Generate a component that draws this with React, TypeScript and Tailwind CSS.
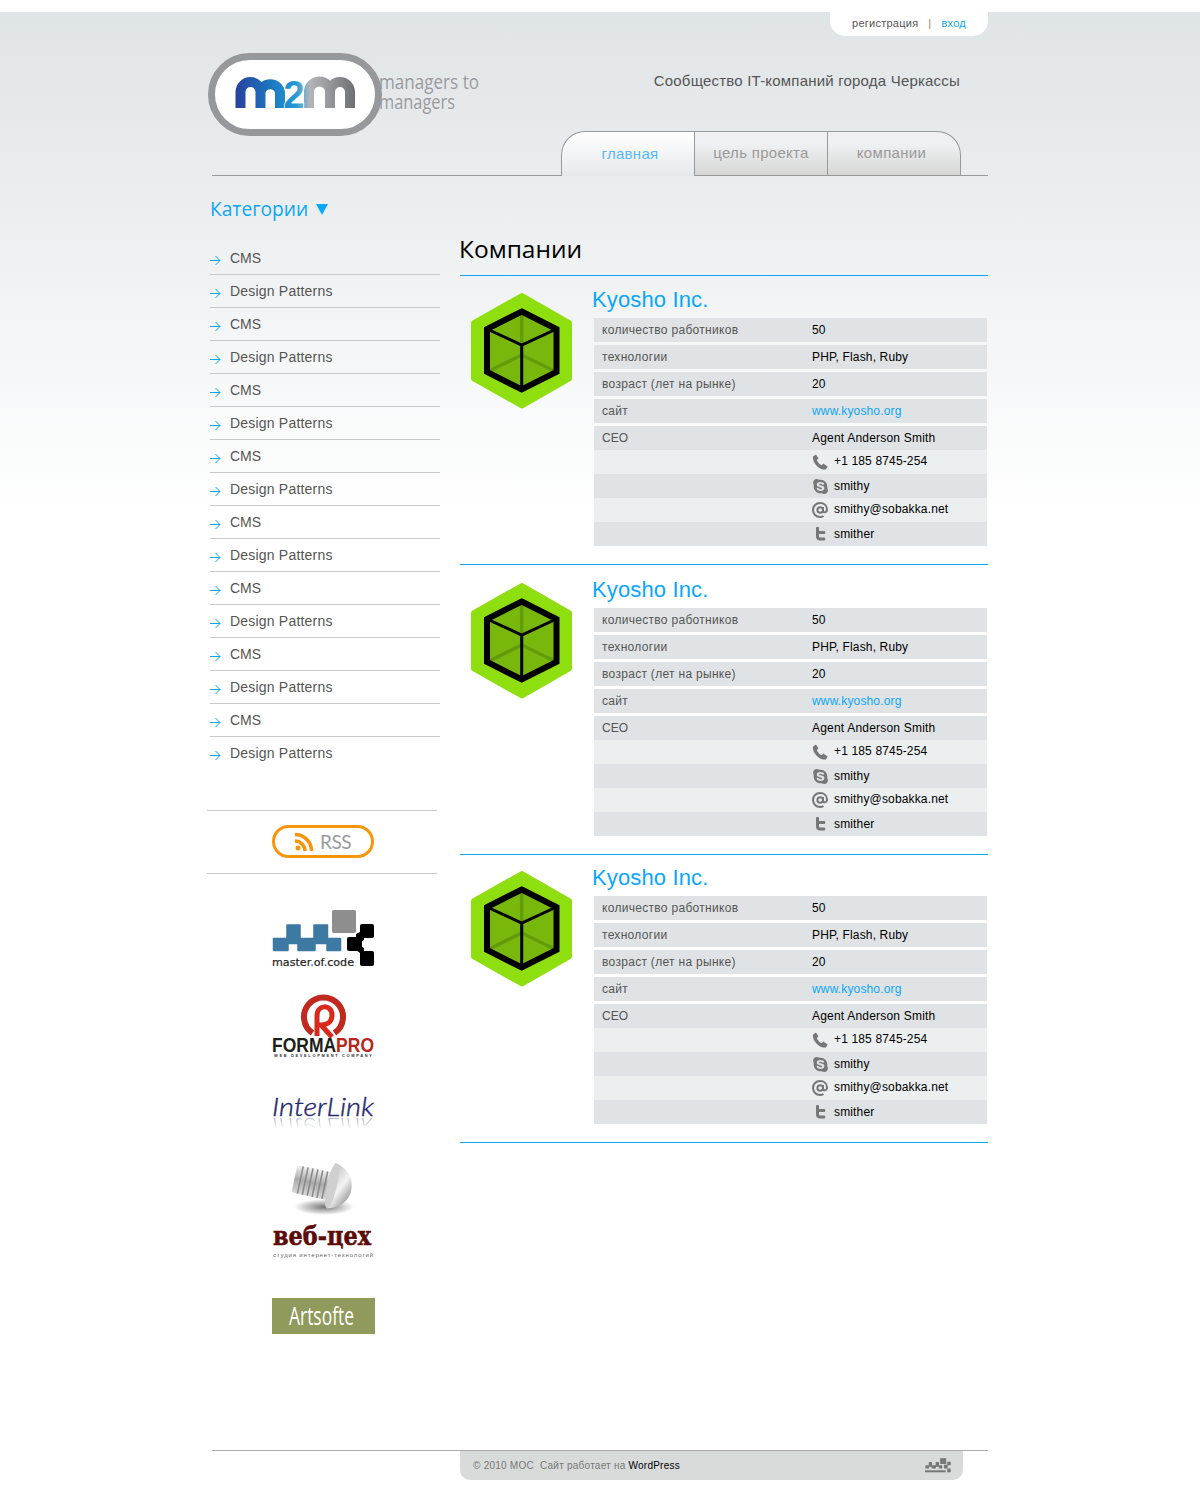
import { FaSkype } from "react-icons/fa";

const categories = Array.from({ length: 16 }, (_, i) => (i % 2 === 0 ? "CMS" : "Design Patterns"));

const blocks = [
  { id: 1, pad: "pt-[11px]" },
  { id: 2, pad: "pt-[12px]" },
  { id: 3, pad: "pt-[10px]" },
];

const facts = [
  { label: "количество работников", value: "50" },
  { label: "технологии", value: "PHP, Flash, Ruby" },
  { label: "возраст (лет на рынке)", value: "20" },
];

const M2mLogo = () => (
  <svg width="280" height="90" viewBox="0 0 280 90" className="block">
    <defs>
      <linearGradient id="m2m" gradientUnits="userSpaceOnUse" x1="27" y1="0" x2="148" y2="0">
        <stop offset="0" stopColor="#28409c" />
        <stop offset="0.3" stopColor="#1c78c0" />
        <stop offset="0.5" stopColor="#229ad6" />
        <stop offset="0.62" stopColor="#b4b5b8" />
        <stop offset="1" stopColor="#6d6e72" />
      </linearGradient>
    </defs>
    <rect x="3.500" y="3.500" width="167" height="76" rx="38" fill="#fff" stroke="#97989c" strokeWidth="7" />
    <g fill="none" stroke="url(#m2m)" strokeWidth="10">
      <path d="M32.500 55V39A10 10 0 0 1 52.500 39V55M52.500 39A10 10 0 0 1 72 39V55" />
      <path d="M101 55V39A10.500 10.500 0 0 1 122 39V55M122 39A10 10 0 0 1 142 39V55" />
    </g>
    <text x="86" y="55" textAnchor="middle" fontFamily="Liberation Sans" fontWeight="700" fontSize="38" fill="url(#m2m)" stroke="#fff" strokeWidth="1.500" paintOrder="stroke">
      2
    </text>
    <g fontFamily="Open Sans" fill="#9a9b9f" fontSize="20">
      <text x="171" y="36" textLength="100" lengthAdjust="spacingAndGlyphs">managers to</text>
      <text x="171" y="56" textLength="76" lengthAdjust="spacingAndGlyphs">managers</text>
    </g>
  </svg>
);

const ArrowIcon = () => (
  <svg width="11" height="11" viewBox="0 0 11 11" className="shrink-0 mt-[4px]" fill="none" stroke="#0ca6fa" strokeWidth="1">
    <path d="M0 5.500H10M5.500 1L10 5.500L5.500 10" />
  </svg>
);

const CubeLogo = () => (
  <svg width="102" height="116" viewBox="0 0 102 116" className="block shrink-0 mt-[6px] ml-[11px]">
    <path d="M51 3L98 30V85.500L51 112.500L3 85.500V30Z" fill="#8fdf10" stroke="#8fdf10" strokeWidth="6" strokeLinejoin="round" />
    <path d="M50.700 18.500L85.500 36V79L50.700 96.500L16 79V36Z" fill="#78b80c" />
    <path d="M50.700 18V62M50.700 62L16 79M50.700 62L85.500 79" stroke="#639c0a" strokeWidth="3.500" fill="none" />
    <path d="M16 36L50.700 52L85.500 36M50.700 52V96" stroke="#000" strokeWidth="3" fill="none" />
    <path d="M50.700 18.500L85.500 36V79L50.700 96.500L16 79V36Z" stroke="#000" strokeWidth="6" fill="none" />
  </svg>
);

const PhoneIcon = () => (
  <svg width="16" height="16" viewBox="0 0 16 16" className="block" fill="#777">
    <path d="M1 2.500L4 .5L6.500 4.500L4.800 6C5.500 8 7.500 10.500 9.700 11.300L11.300 9.500L15.700 12.500L14 15.500C8 16.500 0 9 1 2.500Z" />
  </svg>
);

const AtIcon = () => (
  <svg width="16" height="16" viewBox="0 0 16 16" className="block" fill="none" stroke="#777" strokeWidth="2">
    <circle cx="8.200" cy="8" r="2.800" />
    <path d="M11 5V9C11 11 15 11 15 7.500C15 3.500 12 1 8 1C4 1 1 4 1 8C1 12 4 15 8 15C9.500 15 10.500 14.700 11.500 14" />
  </svg>
);

const TwitterIcon = () => (
  <svg width="16" height="16" viewBox="0 0 16 16" className="block" fill="#777">
    <path d="M4 1.500C4 .8 7 .8 7 1.500V5H12.500C13.500 5 13.500 8 12.500 8H7V10C7 11 7.500 11.500 8.500 11.500H12.500C13.500 11.500 13.500 14.500 12.500 14.500H8C5.500 14.500 4 13 4 10.500Z" />
  </svg>
);

const Contact = ({ dark, icon, text, nudge }: { dark: boolean; icon: React.ReactNode; text: string; nudge: string }) => (
  <div className={`h-6 flex items-center pl-[218px] ${dark ? "bg-[#dfe3e5]" : "bg-[#ebeff0]"}`}>
    <span className="w-4 mr-[6px]">{icon}</span>
    <span className={`text-black tracking-[0.15px] ${nudge}`}>{text}</span>
  </div>
);

const Company = ({ pad }: { pad: string }) => (
  <div className={`flex border-b border-[#0ca6fa] pb-[18px] ${pad}`}>
    <CubeLogo />
    <div className="ml-[21px] w-[393px]">
      <a className="block h-[31px] -ml-[2px] text-[22px] leading-[25px] tracking-[0.13px] text-[#0ca6fa]">Kyosho Inc.</a>
      <div className="text-xs">
        {facts.map((f) => (
          <div key={f.label} className="h-6 mb-[3px] flex items-center bg-[#dfe3e5] px-2">
            <span className="w-[210px] text-[#555] tracking-[0.3px]">{f.label}</span>
            <span className="text-black tracking-[0.15px]">{f.value}</span>
          </div>
        ))}
        <div className="h-6 mb-[3px] flex items-center bg-[#dfe3e5] px-2">
          <span className="w-[210px] text-[#555] tracking-[0.3px]">сайт</span>
          <span className="text-[#0ca6fa] tracking-[0.15px]">www.kyosho.org</span>
        </div>
        <div className="h-6 flex items-center bg-[#dfe3e5] px-2">
          <span className="w-[210px] text-[#555]">CEO</span>
          <span className="text-black tracking-[0.2px]">Agent Anderson Smith</span>
        </div>
        <Contact dark={false} icon={<PhoneIcon />} text="+1 185 8745-254" nudge="-mt-[2px]" />
        <Contact dark icon={<FaSkype size={17} color="#777" className="block" />} text="smithy" nudge="" />
        <Contact dark={false} icon={<AtIcon />} text="smithy@sobakka.net" nudge="-mt-[2px]" />
        <Contact dark icon={<TwitterIcon />} text="smither" nudge="" />
      </div>
    </div>
  </div>
);

const MasterOfCode = () => (
  <svg width="103" height="58" viewBox="0 0 103 58" className="block">
    <rect x="60" y="0" width="24" height="23" rx="2" fill="#8e8e8e" />
    <path d="M1.500 28.500H15V15H28V28.500H42V15H55.500V28.500H68.500V40.500H55V33.500H43V40.500H26V33.500H16V40.500H1.500Z" fill="#3d7aa3" stroke="#3d7aa3" strokeWidth="1.500" strokeLinejoin="round" />
    <g fill="#000">
      <rect x="88" y="14" width="14" height="14" rx="2" />
      <rect x="75" y="27" width="15" height="14" rx="2" />
      <rect x="88" y="41" width="14" height="15" rx="2" />
      <path d="M84 24L92 20V30L84 34ZM84 34L92 38V46L84 40Z" />
    </g>
    <text x="0" y="56" fontFamily="DejaVu Sans" fontSize="11" fill="#222" stroke="#222" strokeWidth="0.200" textLength="82" lengthAdjust="spacingAndGlyphs">
      master<tspan fill="#3d7aa3">.</tspan>of<tspan fill="#3d7aa3">.</tspan>code
    </text>
  </svg>
);

const FormaPro = () => (
  <svg width="103" height="63" viewBox="0 0 103 63" className="block">
    <path d="M40.500 39A19.500 19.500 0 1 1 62.500 39" fill="none" stroke="#c02a1e" strokeWidth="6" />
    <path d="M45 42V22C45 10 60 10 60 21C60 30 52 31 49 31L60 43" fill="none" stroke="#d9281c" strokeWidth="5" />
    <text y="58" x="0" fontFamily="Liberation Sans" fontWeight="700" fontSize="20" fill="#1d1d1b" textLength="102" lengthAdjust="spacingAndGlyphs">
      FORMA<tspan fill="#b5261c">PRO</tspan>
    </text>
    <text y="63" x="2" fontFamily="Liberation Sans" fontWeight="700" fontSize="4" fill="#333" textLength="98" lengthAdjust="spacing">
      WEB DEVELOPMENT COMPANY
    </text>
  </svg>
);

const InterLink = () => (
  <svg width="103" height="34" viewBox="0 0 103 34" className="block">
    <defs>
      <linearGradient id="ilfade" x1="0" y1="0" x2="0" y2="1">
        <stop offset="0" stopColor="#fff" stopOpacity="0.35" />
        <stop offset="1" stopColor="#fff" stopOpacity="0" />
      </linearGradient>
      <mask id="ilmask">
        <rect x="0" y="22" width="103" height="12" fill="url(#ilfade)" />
      </mask>
    </defs>
    <text x="0" y="21" fontFamily="Lato" fontStyle="italic" fontWeight="300" fontSize="26" fill="#1f2a6e" stroke="#1f2a6e" strokeWidth="0.400" textLength="102" lengthAdjust="spacingAndGlyphs">
      InterLink
    </text>
    <g mask="url(#ilmask)">
      <text x="0" y="-23" transform="scale(1,-1)" fontFamily="Lato" fontStyle="italic" fontWeight="300" fontSize="26" fill="#1f2a6e" textLength="102" lengthAdjust="spacingAndGlyphs">
        InterLink
      </text>
    </g>
  </svg>
);

const WebCeh = () => (
  <svg width="103" height="100" viewBox="0 0 103 100" className="block">
    <defs>
      <linearGradient id="bolt" x1="0" y1="0" x2="0" y2="1">
        <stop offset="0" stopColor="#f2f2f2" />
        <stop offset="0.5" stopColor="#aaa" />
        <stop offset="1" stopColor="#d8d8d8" />
      </linearGradient>
      <linearGradient id="head" x1="0" y1="0" x2="1" y2="1">
        <stop offset="0" stopColor="#bbb" />
        <stop offset="0.5" stopColor="#f4f4f4" />
        <stop offset="1" stopColor="#777" />
      </linearGradient>
      <radialGradient id="shadow">
        <stop offset="0" stopColor="#555" stopOpacity="0.8" />
        <stop offset="1" stopColor="#555" stopOpacity="0" />
      </radialGradient>
    </defs>
    <ellipse cx="52" cy="48" rx="30" ry="8" fill="url(#shadow)" />
    <g transform="rotate(12 52 25)">
      <rect x="22" y="12" width="38" height="28" rx="3" fill="url(#bolt)" />
      <path d="M28 12V40M33 12V40M38 12V40M43 12V40M48 12V40M53 12V40" stroke="#888" strokeWidth="1.500" />
      <path d="M58 2C72 4 80 14 80 26C80 36 72 46 60 48C66 36 66 14 58 2Z" fill="url(#head)" />
      <ellipse cx="60" cy="25" rx="5" ry="23" fill="#cfcfcf" />
    </g>
    <text x="1" y="86" fontFamily="DejaVu Serif" fontWeight="700" fontSize="26" fill="#5c0a0a" stroke="#5c0a0a" strokeWidth="0.600" textLength="98" lengthAdjust="spacingAndGlyphs">
      веб-цех
    </text>
    <text x="1" y="98" fontFamily="Liberation Sans" fontSize="6" fill="#666" textLength="100" lengthAdjust="spacing">
      студия интернет-технологий
    </text>
  </svg>
);

const Artsofte = () => (
  <div className="w-[103px] h-9 pr-[4px] bg-[#8f9a5c] flex items-center justify-center">
    <svg width="65" height="36" viewBox="0 0 65 36" className="block">
      <text x="0" y="27" fontFamily="Open Sans" fontSize="26" fill="#fff" textLength="65" lengthAdjust="spacingAndGlyphs">
        Artsofte
      </text>
    </svg>
  </div>
);

const Sidebar = () => (
  <aside className="w-[230px] ml-[2px] pt-[10px] shrink-0">
    <ul className="text-sm text-[#555]">
      {categories.map((c, i) => (
        <li key={i} className={`h-[33px] flex items-center gap-[9px] ${i < 15 ? "border-b border-[#c8c8c8]" : ""}`}>
          <ArrowIcon />
          <span className={`mt-[-1px] ${c === "CMS" ? "" : "tracking-[0.2px]"}`}>{c}</span>
        </li>
      ))}
    </ul>
    <div className="-ml-[3px] w-[230px] pl-[2px] pb-[2px] mt-[40px] h-16 border-y border-[#c8c8c8] flex items-center justify-center">
      <div className="w-[102px] h-[33px] border-[3px] border-[#f7960a] rounded-[17px] flex items-center justify-center gap-[6px]">
        <svg width="19" height="19" viewBox="0 0 19 19" fill="none" stroke="#f7960a" strokeWidth="3.500">
          <circle cx="3" cy="16" r="2.500" fill="#f7960a" stroke="none" />
          <path d="M0 9A10 10 0 0 1 10 19M0 2.500A16.500 16.500 0 0 1 16.500 19" />
        </svg>
        <span className="font-['Lato',sans-serif] text-[19px] tracking-[-0.5px] leading-none text-[#9a9b9f]">RSS</span>
      </div>
    </div>
    <div className="flex flex-col items-center pt-[36px] -ml-[3px] w-[233px]">
      <MasterOfCode />
      <div className="mt-[26px]"><FormaPro /></div>
      <div className="mt-[38px]"><InterLink /></div>
      <div className="mt-[30px]"><WebCeh /></div>
      <div className="mt-[39px]"><Artsofte /></div>
    </div>
  </aside>
);

export default function App() {
  return (
    <div className="bg-white pt-3 font-['Liberation_Sans',Arial,sans-serif]">
      <div className="bg-[linear-gradient(180deg,#dfe4e6_0px,#ffffff_500px)] pb-8">
        <div className="mx-auto w-[784px] pr-1">
          <header>
            <div className="flex justify-end">
              <div className="w-[158px] h-6 pb-[2px] bg-white rounded-b-[15px] flex items-center justify-center gap-[10px] text-[11px] tracking-[0.25px] text-[#555]">
                <span>регистрация</span>
                <span className="text-[#888]">|</span>
                <a className="text-[#0ca6fa]">вход</a>
              </div>
            </div>
            <div className="flex pt-[17px]">
              <M2mLogo />
              <p className="ml-auto mr-7 mt-[18px] text-[15px] leading-[20px] tracking-[0.2px] text-[#555]">Сообщество IT-компаний города Черкассы</p>
            </div>
            <div className="flex h-[45px] -mt-[12px] ml-1 text-[15px] tracking-[0.3px]">
              <div className="flex-1 border-b border-[#999]" />
              <a className="w-[134px] pl-[4px] border border-b-0 border-[#999] rounded-tl-[24px] bg-[linear-gradient(180deg,#ffffff,#e6e9eb)] flex items-center justify-center text-[#56b8fb]">главная</a>
              <a className="w-[133px] border-y border-r border-[#999] bg-[linear-gradient(180deg,#eef0f1_30%,#d6d6d5)] flex items-center justify-center text-[#999]">цель проекта</a>
              <a className="w-[133px] pr-[5px] border-y border-r border-[#999] rounded-tr-[24px] bg-[linear-gradient(180deg,#eef0f1_30%,#d6d6d5)] flex items-center justify-center text-[#999]">компании</a>
              <div className="w-[27px] border-b border-[#999]" />
            </div>
            <div className="h-[56px] ml-[2px] flex items-center gap-2 pt-[20px] pb-[10px]">
              <h2 className="font-['Open_Sans',sans-serif] text-[19.2px] text-[#0ca6fa]">Категории</h2>
              <svg width="12" height="11" viewBox="0 0 12 11" fill="#0ca6fa"><path d="M0 0H12L6 11Z" /></svg>
            </div>
          </header>

          <div className="flex h-[1218px]">
            <Sidebar />
            <main className="ml-5 flex-1">
              <h1 className="h-[44px] border-b border-[#0ca6fa] font-['Open_Sans',sans-serif] text-[24.5px] leading-[34px] -indent-px text-black">Компании</h1>
              {blocks.map((b) => (
                <Company key={b.id} pad={b.pad} />
              ))}
            </main>
          </div>

          <footer className="ml-1 border-t border-[#aaa]">
            <div className="ml-[248px] w-[503px] h-[29px] pb-[1px] bg-[#d9dbdb] rounded-b-[10px] flex items-center justify-between pl-[13px] pr-[12px] text-[10px] tracking-[0.24px] text-[#777]">
              <span>© 2010 МОС&nbsp;&nbsp;Сайт работает на <a className="text-black">WordPress</a></span>
              <svg width="26" height="15" viewBox="0 0 103 58" fill="#777">
                <rect x="60" y="0" width="24" height="23" />
                <path d="M1.500 28.500H15V15H28V28.500H42V15H55.500V28.500H68.500V40.500H55V33.500H43V40.500H26V33.500H16V40.500H1.500Z" />
                <rect x="88" y="14" width="14" height="14" />
                <rect x="75" y="26" width="15" height="15" />
                <rect x="88" y="41" width="14" height="15" />
                <rect x="0" y="48" width="82" height="8" />
              </svg>
            </div>
          </footer>
        </div>
      </div>
    </div>
  );
}
